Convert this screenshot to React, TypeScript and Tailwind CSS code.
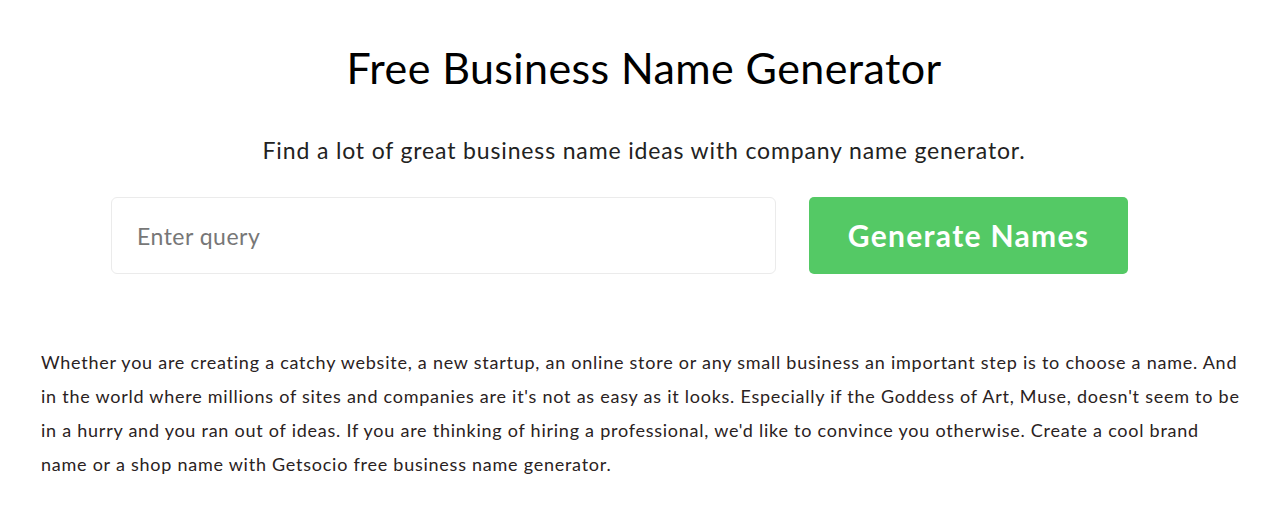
export default function App() {
  return (
    <div
      className="min-h-[516px] w-full bg-white text-[#222]"
      style={{ fontFamily: 'Lato, "Noto Sans", sans-serif' }}
    >
      <div className="flex flex-col items-center pt-[42px] pl-[12px]">
        <h1 className="text-[43px] leading-[52px] font-normal text-black tracking-[0.4px]">
          Free Business Name Generator
        </h1>
        <p className="mt-[42px] text-[23px] leading-[28px] text-[#222] tracking-[0.85px]">
          Find a lot of great business name ideas with company name generator.
        </p>
      </div>

      <div className="mt-[33px] ml-[111px] flex gap-[33px]">
        <input
          type="text"
          placeholder="Enter query"
          className="h-[77px] w-[665px] rounded-[6px] border border-[#ebebeb] bg-white px-[25px] text-[23px] tracking-[0.5px] text-[#333] placeholder:text-[#777] outline-none"
        />
        <button className="h-[77px] w-[319px] rounded-[5px] bg-[#54c965] text-[30px] font-bold tracking-[1.3px] text-white">
          Generate Names
        </button>
      </div>

      <p className="mt-[71px] pl-[41px] pr-[10px] text-[18px] leading-[34px] text-[#2a2222] tracking-[0.75px]">
        Whether you are creating a catchy website, a new startup, an online store or any small business an important step is to choose a name. And
        <br />
        in the world where millions of sites and companies are it's not as easy as it looks. Especially if the Goddess of Art, Muse, doesn't seem to be
        <br />
        in a hurry and you ran out of ideas. If you are thinking of hiring a professional, we'd like to convince you otherwise. Create a cool brand
        <br />
        name or a shop name with Getsocio free business name generator.
      </p>
    </div>
  );
}
